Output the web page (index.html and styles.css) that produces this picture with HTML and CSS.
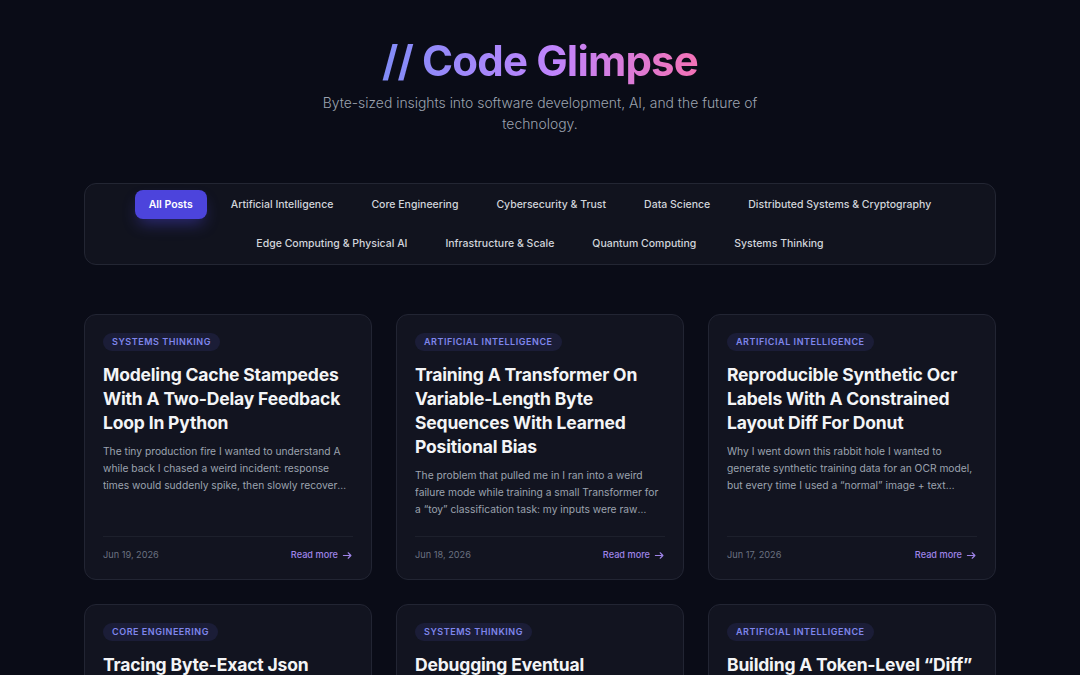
FILE: index.html
```html
<!DOCTYPE html>
<html lang="en">
<head>
<meta charset="utf-8">
<title>Code Glimpse</title>
<link rel="stylesheet" href="styles.css">
</head>
<body>
<div class="page">
  <header class="hero">
    <h1 class="brand">// Code Glimpse</h1>
    <p class="tagline">Byte-sized insights into software development, AI, and the future of technology.</p>
  </header>

  <nav class="filters">
    <button class="chip active">All Posts</button>
    <button class="chip">Artificial Intelligence</button>
    <button class="chip">Core Engineering</button>
    <button class="chip">Cybersecurity &amp; Trust</button>
    <button class="chip">Data Science</button>
    <button class="chip">Distributed Systems &amp; Cryptography</button>
    <button class="chip">Edge Computing &amp; Physical AI</button>
    <button class="chip">Infrastructure &amp; Scale</button>
    <button class="chip">Quantum Computing</button>
    <button class="chip">Systems Thinking</button>
  </nav>

  <main class="grid">
    <article class="card">
      <span class="badge">Systems Thinking</span>
      <h2 class="title">Modeling Cache Stampedes With A Two-Delay Feedback Loop In Python</h2>
      <p class="excerpt">The tiny production fire I wanted to understand A while back I chased a weird incident: response times would suddenly spike, then slowly recover—and the graphs looked like a heartbeat.</p>
      <div class="meta"><span class="date">Jun 19, 2026</span><a class="more" href="#">Read more <svg viewBox="0 0 16 16" width="11" height="11"><path d="M2 8h11M9 4l4 4-4 4" fill="none" stroke="currentColor" stroke-width="1.6" stroke-linecap="round" stroke-linejoin="round"/></svg></a></div>
    </article>
    <article class="card">
      <span class="badge">Artificial Intelligence</span>
      <h2 class="title">Training A Transformer On Variable-Length Byte Sequences With Learned Positional Bias</h2>
      <p class="excerpt">The problem that pulled me in I ran into a weird failure mode while training a small Transformer for a “toy” classification task: my inputs were raw bytes of varying length.</p>
      <div class="meta"><span class="date">Jun 18, 2026</span><a class="more" href="#">Read more <svg viewBox="0 0 16 16" width="11" height="11"><path d="M2 8h11M9 4l4 4-4 4" fill="none" stroke="currentColor" stroke-width="1.6" stroke-linecap="round" stroke-linejoin="round"/></svg></a></div>
    </article>
    <article class="card">
      <span class="badge">Artificial Intelligence</span>
      <h2 class="title">Reproducible Synthetic Ocr Labels With A Constrained Layout Diff For Donut</h2>
      <p class="excerpt">Why I went down this rabbit hole I wanted to generate synthetic training data for an OCR model, but every time I used a “normal” image + text pipeline the labels drifted.</p>
      <div class="meta"><span class="date">Jun 17, 2026</span><a class="more" href="#">Read more <svg viewBox="0 0 16 16" width="11" height="11"><path d="M2 8h11M9 4l4 4-4 4" fill="none" stroke="currentColor" stroke-width="1.6" stroke-linecap="round" stroke-linejoin="round"/></svg></a></div>
    </article>
    <article class="card">
      <span class="badge">Core Engineering</span>
      <h2 class="title">Tracing Byte-Exact Json Serialization Across Language Boundaries</h2>
      <p class="excerpt">I needed two services to agree on the exact bytes of a JSON payload, and it turned out to be harder than it sounded.</p>
      <div class="meta"><span class="date">Jun 16, 2026</span><a class="more" href="#">Read more <svg viewBox="0 0 16 16" width="11" height="11"><path d="M2 8h11M9 4l4 4-4 4" fill="none" stroke="currentColor" stroke-width="1.6" stroke-linecap="round" stroke-linejoin="round"/></svg></a></div>
    </article>
    <article class="card">
      <span class="badge">Systems Thinking</span>
      <h2 class="title">Debugging Eventual Consistency With A Tiny Simulation</h2>
      <p class="excerpt">A small model of replicas and delays helped me see why reads kept returning stale values.</p>
      <div class="meta"><span class="date">Jun 15, 2026</span><a class="more" href="#">Read more <svg viewBox="0 0 16 16" width="11" height="11"><path d="M2 8h11M9 4l4 4-4 4" fill="none" stroke="currentColor" stroke-width="1.6" stroke-linecap="round" stroke-linejoin="round"/></svg></a></div>
    </article>
    <article class="card">
      <span class="badge">Artificial Intelligence</span>
      <h2 class="title">Building A Token-Level “Diff” For Model Outputs</h2>
      <p class="excerpt">Comparing two generations word by word hides the interesting changes, so I compared tokens instead.</p>
      <div class="meta"><span class="date">Jun 14, 2026</span><a class="more" href="#">Read more <svg viewBox="0 0 16 16" width="11" height="11"><path d="M2 8h11M9 4l4 4-4 4" fill="none" stroke="currentColor" stroke-width="1.6" stroke-linecap="round" stroke-linejoin="round"/></svg></a></div>
    </article>
  </main>
</div>
</body>
</html>
```

FILE: styles.css
```css
* { box-sizing: border-box; }
html, body { margin: 0; padding: 0; }
body {
  background: #0a0c17;
  color: #e5e7eb;
  font-family: Inter, "Noto Sans", "Liberation Sans", sans-serif;
}
.page {
  width: 912px;
  margin: 0 auto;
  padding-top: 33px;
}
.hero { text-align: center; }
.brand {
  margin: 0;
  font-size: 42px;
  line-height: 56px;
  font-weight: 700;
  letter-spacing: -0.02em;
  display: inline-block;
  background: linear-gradient(90deg, #818cf8 0%, #c084fc 55%, #f472b6 100%);
  -webkit-background-clip: text;
  background-clip: text;
  color: transparent;
}
.tagline {
  margin: 4px auto 0;
  max-width: 448px;
  font-size: 13.9px;
  line-height: 21px;
  color: #9ca3af;
  font-weight: 300;
}
.filters {
  margin-top: 48px;
  display: flex;
  flex-wrap: wrap;
  justify-content: center;
  gap: 10px;
  padding: 6px 16px;
  background: #11131e;
  border: 1px solid #232633;
  border-radius: 12px;
}
.chip {
  font-family: inherit;
  font-size: 10.5px;
  font-weight: 500;
  color: #d1d5db;
  background: transparent;
  border: 0;
  border-radius: 8px;
  height: 29px;
  padding: 0 14px;
  cursor: pointer;
}
.chip.active {
  background: #4c44dc;
  color: #fff;
  font-weight: 600;
  box-shadow: 0 8px 16px -4px rgba(79, 70, 229, 0.45);
}
.grid {
  margin-top: 49px;
  display: grid;
  grid-template-columns: repeat(3, 1fr);
  gap: 24px;
}
.card {
  display: flex;
  flex-direction: column;
  align-items: flex-start;
  background: #121420;
  border: 1px solid #222533;
  border-radius: 12px;
  padding: 18px 18px 17px;
}
.badge {
  display: inline-block;
  font-size: 9px;
  line-height: 18px;
  height: 18px;
  font-weight: 600;
  letter-spacing: 0.06em;
  text-transform: uppercase;
  color: #7f86ec;
  background: #1b1d37;
  border-radius: 999px;
  padding: 0 9px;
}
.title {
  margin: 12px 0 0;
  font-size: 17.5px;
  line-height: 24px;
  font-weight: 700;
  color: #f3f4f6;
  letter-spacing: -0.01em;
}
.excerpt {
  margin: 8px 0 18px;
  font-size: 10.25px;
  line-height: 17px;
  color: #9ca3af;
  display: -webkit-box;
  -webkit-line-clamp: 3;
  -webkit-box-orient: vertical;
  overflow: hidden;
}
.meta {
  margin-top: auto;
  width: 100%;
  display: flex;
  justify-content: space-between;
  align-items: center;
  border-top: 1px solid #1d202c;
  padding-top: 11px;
}
.date { font-size: 9.2px; color: #6b7280; line-height: 14px; }
.more {
  font-size: 9.2px;
  line-height: 14px;
  font-weight: 500;
  color: #9f84e8;
  text-decoration: none;
  display: inline-flex;
  align-items: center;
  gap: 4px;
}
```
